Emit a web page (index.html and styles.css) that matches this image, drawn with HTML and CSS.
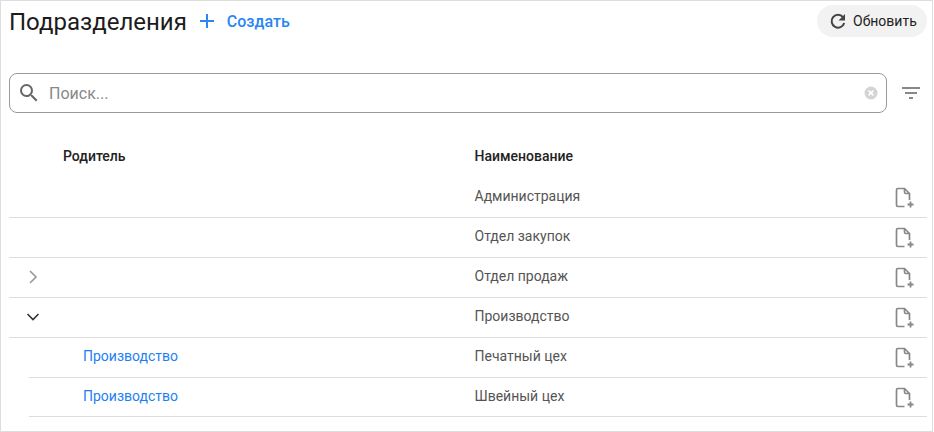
FILE: index.html
```html
<!DOCTYPE html>
<html lang="ru">
<head>
<meta charset="utf-8">
<title>Подразделения</title>
<link rel="stylesheet" href="styles.css">
</head>
<body>
<svg class="defs" width="0" height="0">
  <symbol id="doc" viewBox="0 0 20 22">
    <path d="M10.500 19.500H4A1.500 1.500 0 0 1 2.500 18V3A1.500 1.500 0 0 1 4 1.500H10.500L15.500 6.500V13" fill="none" stroke="#888" stroke-width="1.700"/>
    <path d="M10.500 1.500V5A1.500 1.500 0 0 0 12 6.500H15.500" fill="none" stroke="#888" stroke-width="1.700"/>
    <path d="M16.500 14.500V20.500M13.500 17.500H19.500" stroke="#888" stroke-width="1.800"/>
  </symbol>
</svg>
<main class="frame">
  <header class="top">
    <h1 class="title">Подразделения</h1>
    <button class="create">
      <svg width="16" height="16" viewBox="0 0 16 16"><path d="M8 1v14M1 8h14" stroke="#2a85f5" stroke-width="2" fill="none"/></svg>
      <span>Создать</span>
    </button>
    <button class="refresh">
      <svg width="20" height="20" viewBox="0 0 20 20"><path d="M15 6.200A6.400 6.400 0 1 0 16.200 12" fill="none" stroke="#444" stroke-width="2"/><path fill="#444" d="M17 3v6.500h-6.500z"/></svg>
      <span>Обновить</span>
    </button>
  </header>
  <div class="searchrow">
    <div class="search">
      <svg class="lens" width="24" height="24" viewBox="0 0 24 24"><path fill="#666" d="M15.500 14h-.79l-.28-.27A6.470 6.470 0 0 0 16 9.500 6.500 6.500 0 1 0 9.500 16c1.610 0 3.090-.59 4.230-1.570l.27.28v.79l5 4.990L20.490 19l-4.990-5zm-6 0C7.010 14 5 11.990 5 9.500S7.010 5 9.500 5 14 7.010 14 9.500 11.990 14 9.500 14z"/></svg>
      <span class="placeholder">Поиск...</span>
      <svg class="clear" width="14" height="14" viewBox="0 0 14 14"><circle cx="7" cy="7" r="6.500" fill="#d4d4d4"/><path d="M4.600 4.600l4.800 4.800M9.400 4.600l-4.800 4.800" stroke="#fff" stroke-width="1.600"/></svg>
    </div>
    <svg class="filter" width="18" height="12" viewBox="0 0 18 12"><path d="M0 1h18M3 6h12M7 11h4" stroke="#888" stroke-width="2" fill="none"/></svg>
  </div>
  <section class="table">
    <div class="row head">
      <div class="parent">Родитель</div>
      <div class="name">Наименование</div>
    </div>
    <div class="row line">
      <div class="parent"></div><div class="name">Администрация</div>
      <svg class="doc"><use href="#doc"/></svg>
    </div>
    <div class="row line">
      <div class="parent"></div><div class="name">Отдел закупок</div>
      <svg class="doc"><use href="#doc"/></svg>
    </div>
    <div class="row line">
      <svg class="chev" width="10" height="16" viewBox="0 0 10 16"><path d="M2 2l6 6-6 6" fill="none" stroke="#999" stroke-width="1.600"/></svg>
      <div class="parent"></div><div class="name">Отдел продаж</div>
      <svg class="doc"><use href="#doc"/></svg>
    </div>
    <div class="row line">
      <svg class="chev open" width="14" height="10" viewBox="0 0 14 10"><path d="M1.500 2l5.500 5.500L12.500 2" fill="none" stroke="#333" stroke-width="1.600"/></svg>
      <div class="parent"></div><div class="name">Производство</div>
      <svg class="doc"><use href="#doc"/></svg>
    </div>
    <div class="row line child">
      <div class="parent"><a href="#">Производство</a></div><div class="name">Печатный цех</div>
      <svg class="doc"><use href="#doc"/></svg>
    </div>
    <div class="row line child last">
      <div class="parent"><a href="#">Производство</a></div><div class="name">Швейный цех</div>
      <svg class="doc"><use href="#doc"/></svg>
    </div>
  </section>
</main>
</body>
</html>
```
FILE: styles.css
```css
* { box-sizing: border-box; }
html, body { margin: 0; height: 100%; overflow: hidden; background: #fff; }
body { font-family: Roboto, "Liberation Sans", sans-serif; color: #222; }
.defs { position: absolute; }

.frame {
  width: 933px;
  height: 432px;
  border: 1px solid #ddd;
  padding: 0 5px 0 8px;
  position: relative;
}

.top { display: flex; align-items: center; height: 40px; margin-top: 1px; }
.title { margin: 0 12px 0 0; font-size: 24px; font-weight: 400; color: #1c1c1c; line-height: 36px; }
.create, .refresh { border: 0; background: none; font-family: inherit; display: flex; align-items: center; padding: 0; cursor: pointer; }
.create { color: #2a85f5; font-size: 16px; font-weight: 500; gap: 12px; margin-top: -2px; }
.refresh {
  margin-left: auto; margin-top: -3px;
  height: 32px; width: 110px; border-radius: 16px; background: #f2f2f2;
  font-size: 14px; color: #222; padding-left: 11px; gap: 5px;
}

.searchrow { display: flex; align-items: center; margin-top: 31px; }
.search {
  width: 878px; height: 40px;
  border: 1px solid #999; border-radius: 8px;
  display: flex; align-items: center; padding: 0 8px 0 7px;
}
.lens { flex: none; }
.placeholder { margin-left: 8px; font-size: 16px; color: #888; }
.clear { margin-left: auto; }
.filter { margin-left: 15px; }

.table { margin-top: 24px; }
.row { display: flex; align-items: center; height: 40px; position: relative; font-size: 14px; color: #555; padding-bottom: 3px; }
.head { color: #222; font-weight: 500; height: 41px; padding-bottom: 3px; }
.line { border-bottom: 1px solid #ddd; }
.parent { width: 465.5px; padding-left: 54px; flex: none; }
.child { margin-left: 20px; }
.child .parent { width: 445.5px; padding-left: 54px; }
.name { flex: 1; }
.last { height: 39px; }
.parent a { color: #1e7ff5; text-decoration: none; }
.doc { position: absolute; right: 13px; top: 9px; width: 20px; height: 22px; }
.chev { position: absolute; left: 19px; top: 11px; }
.chev.open { left: 17px; top: 14px; }
```
